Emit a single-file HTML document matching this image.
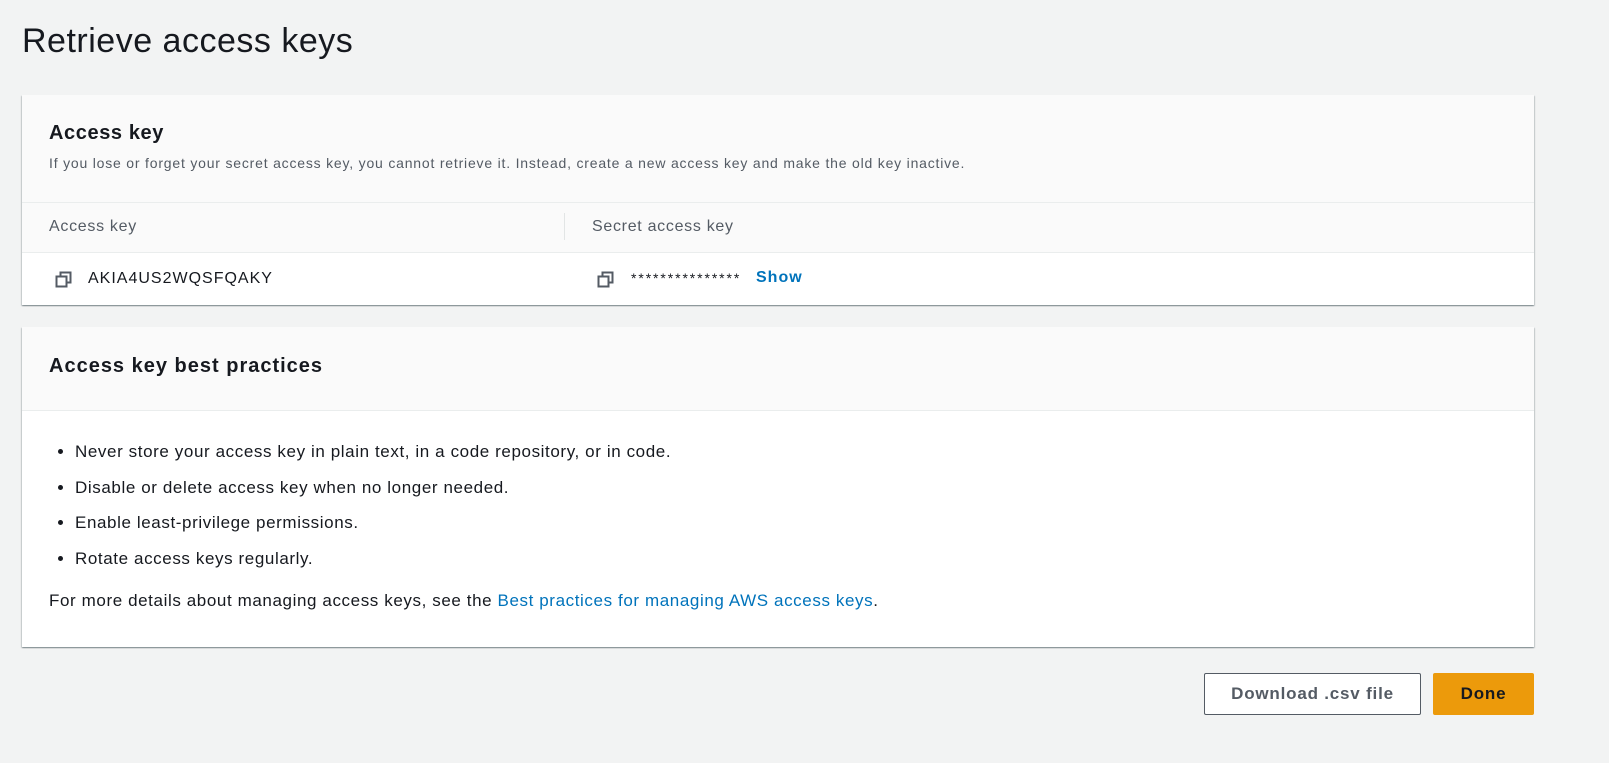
<!DOCTYPE html>
<html><head><style>
body{margin:0;background:#f2f3f3;font-family:"Liberation Sans",sans-serif;color:#16191f;width:1609px;height:763px;overflow:hidden;position:relative}
.a{position:absolute}
h1{position:absolute;left:22px;top:22px;margin:0;font-weight:400;font-size:34px;letter-spacing:0.5px}
.card{position:absolute;left:22px;width:1512px;background:#fff;box-shadow:0 1px 1px rgba(0,28,36,.3),1px 1px 1px rgba(0,28,36,.15),-1px 1px 1px rgba(0,28,36,.15)}
.copy{position:absolute;width:17px;height:17px}
li{margin-bottom:16px}
</style></head><body>
<h1>Retrieve access keys</h1>
<div class="card" style="top:95px;height:210px">
 <div class="a" style="left:0;top:0;width:1512px;height:107px;background:#fafafa;border-bottom:1px solid #eaeded"></div>
 <div class="a" style="left:27px;top:27px;font-size:20px;font-weight:700;letter-spacing:0.6px">Access key</div>
 <div class="a" style="left:27px;top:60px;font-size:14px;color:#545b64;letter-spacing:0.8px">If you lose or forget your secret access key, you cannot retrieve it. Instead, create a new access key and make the old key inactive.</div>
 <div class="a" style="left:0;top:108px;width:1512px;height:49px;background:#fafafa;border-bottom:1px solid #eaeded"></div>
 <div class="a" style="left:27px;top:123px;font-size:16px;color:#545b64;letter-spacing:0.7px">Access key</div>
 <div class="a" style="left:542px;top:118px;width:1px;height:27px;background:#e2e5e5"></div>
 <div class="a" style="left:570px;top:123px;font-size:16px;color:#545b64;letter-spacing:0.7px">Secret access key</div>
 <svg class="copy" style="left:33px;top:176px" viewBox="0 0 17 17" fill="none" stroke="#545b64" stroke-width="2"><rect x="1.5" y="5.5" width="10" height="10"/><path d="M5.5 5.5V1.5h10v10h-4"/></svg>
 <div class="a" style="left:66px;top:175px;font-size:16px;letter-spacing:1px">AKIA4US2WQSFQAKY</div>
 <svg class="copy" style="left:575px;top:176px" viewBox="0 0 17 17" fill="none" stroke="#545b64" stroke-width="2"><rect x="1.5" y="5.5" width="10" height="10"/><path d="M5.5 5.5V1.5h10v10h-4"/></svg>
 <div class="a" style="left:609px;top:175px;font-size:14px;letter-spacing:1.9px">***************</div>
 <div class="a" style="left:734px;top:174px;font-size:16px;font-weight:700;color:#0073bb;letter-spacing:1px">Show</div>
</div>
<div class="card" style="top:327px;height:320px">
 <div class="a" style="left:0;top:0;width:1512px;height:83px;background:#fafafa;border-bottom:1px solid #eaeded"></div>
 <div class="a" style="left:27px;top:28px;font-size:20px;font-weight:700;letter-spacing:1px">Access key best practices</div>
 <ul class="a" style="left:0;top:115px;margin:0;padding-left:53px;font-size:17px;line-height:19.5px;letter-spacing:0.6px">
  <li>Never store your access key in plain text, in a code repository, or in code.</li>
  <li>Disable or delete access key when no longer needed.</li>
  <li>Enable least-privilege permissions.</li>
  <li>Rotate access keys regularly.</li>
 </ul>
 <div class="a" style="left:27px;top:264px;font-size:17px;letter-spacing:0.6px">For more details about managing access keys, see the <span style="color:#0073bb">Best practices for managing AWS access keys</span>.</div>
</div>
<div class="a" style="left:1204px;top:673px;width:215px;height:40px;border:1px solid #545b64;border-radius:2px;background:#fff;color:#545b64;font-weight:700;font-size:17px;letter-spacing:0.8px;text-align:center;line-height:40px">Download .csv file</div>
<div class="a" style="left:1433px;top:673px;width:101px;height:42px;border-radius:2px;background:#ec9a0b;color:#16191f;font-weight:700;font-size:17px;letter-spacing:0.8px;text-align:center;line-height:42px">Done</div>
</body></html>
